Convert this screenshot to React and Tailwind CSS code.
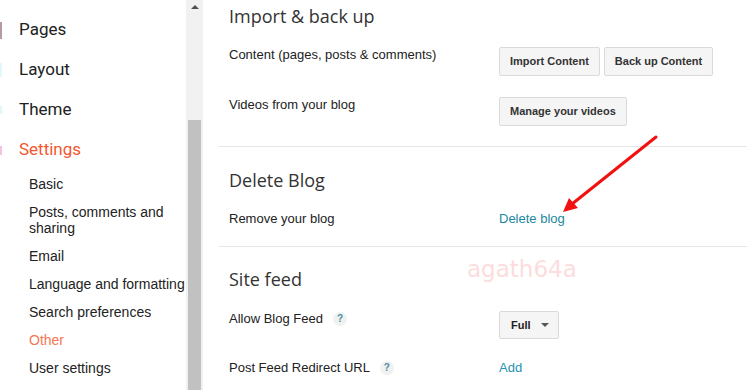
import React from 'react';

const navItems = [
  { label: 'Pages', icon: 'bg-[#b79aa8]', iconH: 'h-[17px]' },
  { label: 'Layout', icon: 'bg-[#e3f8fa]', iconH: 'h-[14px]' },
  { label: 'Theme', icon: 'bg-[#dff7f9]', iconH: 'h-[8px]' },
];

const subItems = [
  { label: 'Basic' },
  { label: 'Posts, comments and sharing', tall: true },
  { label: 'Email' },
  { label: 'Language and formatting' },
  { label: 'Search preferences' },
  { label: 'Other', active: true },
  { label: 'User settings' },
];

const Help = () => (
  <span className="ml-[10px] inline-flex h-[14px] w-[14px] items-center justify-center rounded-full bg-[#f1f1f1] text-[10px] font-bold text-[#4c8fa3]">
    ?
  </span>
);

const Btn = ({ children }) => (
  <button className="h-[29px] rounded-[2px] border border-[#dadada] bg-[#f5f5f5] px-[10px] text-[11px] font-bold text-[#333]">
    {children}
  </button>
);

const Row = ({ label, help, children, className = '' }) => (
  <div className={`flex items-start ${className}`}>
    <div className="flex w-[270px] items-center pt-[1px] text-[13px] leading-[16px] text-[#222]">
      {label}
      {help && <Help />}
    </div>
    <div className="flex gap-[4px]">{children}</div>
  </div>
);

const Heading = ({ children }) => (
  <h2 className="h-[32px] font-['Open_Sans',sans-serif] text-[18px] leading-[32px] text-[#333]">{children}</h2>
);

export default function App() {
  return (
    <div className="relative flex h-[390px] w-[747px] overflow-hidden bg-white font-['Liberation_Sans',Arial,sans-serif]">
      {/* Sidebar */}
      <div className="w-[186px] shrink-0 pt-[10px]">
        {navItems.map((n) => (
          <div key={n.label} className="flex h-[40px] items-center">
            <div className={`w-[2px] ${n.iconH} ${n.icon}`} />
            <span className="ml-[17px] font-['Roboto',sans-serif] text-[17px] text-[#212121]">{n.label}</span>
          </div>
        ))}
        <div className="flex h-[40px] items-center">
          <div className="h-[9px] w-[2px] bg-[#f6c2e4]" />
          <span className="ml-[17px] font-['Roboto',sans-serif] text-[17px] text-[#f4562f]">Settings</span>
        </div>
        {subItems.map((s) => (
          <div
            key={s.label}
            className={`flex items-center pl-[29px] text-[14px] leading-[16px] ${s.tall ? 'h-[44px]' : 'h-[28px]'} ${s.active ? 'text-[#f77654]' : 'text-[#222]'}`}
          >
            <span className={s.tall ? 'w-[140px]' : 'whitespace-nowrap'}>{s.label}</span>
          </div>
        ))}
      </div>

      {/* Scrollbar */}
      <div className="flex w-[17px] shrink-0 flex-col bg-[#f1f1f1]">
        <div className="flex h-[14px] items-center justify-center">
          <div className="h-0 w-0 border-x-[4px] border-b-[4px] border-x-transparent border-b-[#505050]" />
        </div>
        <div className="flex-1" />
        <div className="mx-[2px] h-[270px] bg-[#c1c1c1]" />
      </div>

      {/* Main */}
      <div className="flex-1 pl-[16px]">
        <section className="pl-[10px] pb-[20px]">
          <Heading>Import &amp; back up</Heading>
          <Row label="Content (pages, posts & comments)" className="mt-[14px]">
            <div className="mt-[1px] flex gap-[4px]">
              <Btn>Import Content</Btn>
              <Btn>Back up Content</Btn>
            </div>
          </Row>
          <Row label="Videos from your blog" className="mt-[20px]">
            <div className="mt-[1px]">
              <Btn>Manage your videos</Btn>
            </div>
          </Row>
        </section>

        <section className="border-t border-[#e5e5e5] pl-[10px] pt-[17px] pb-[19px]">
          <Heading>Delete Blog</Heading>
          <Row label="Remove your blog" className="mt-[14px]">
            <a className="pt-[1px] text-[13px] leading-[16px] text-[#22889e]">Delete blog</a>
          </Row>
        </section>

        <section className="border-t border-[#e5e5e5] pl-[10px] pt-[16px]">
          <Heading>Site feed</Heading>
          <Row label="Allow Blog Feed" help className="mt-[15px]">
            <button className="mt-[1px] flex h-[28px] items-center rounded-[2px] border border-[#dadada] bg-[#f5f5f5] pl-[11px] pr-[9px] text-[11px] font-bold text-[#222]">
              Full
              <span className="ml-[10px] h-0 w-0 border-x-[4px] border-t-[4px] border-x-transparent border-t-[#555]" />
            </button>
          </Row>
          <Row label="Post Feed Redirect URL" help className="mt-[20px]">
            <a className="pt-[1px] text-[13px] leading-[16px] text-[#2592b0]">Add</a>
          </Row>
        </section>
      </div>

      {/* Watermark */}
      <div className="pointer-events-none absolute left-[467px] top-[252px] font-['DejaVu_Sans',sans-serif] text-[23px] text-[#fcdcdc]">
        agath64a
      </div>

      {/* Red arrow annotation */}
      <svg className="pointer-events-none absolute left-0 top-0" width="747" height="390">
        <line x1="656" y1="137" x2="572" y2="204" stroke="#f21010" strokeWidth="3" strokeLinecap="round" />
        <polygon points="563,212 569,198 578,208" fill="#f21010" />
      </svg>
    </div>
  );
}
